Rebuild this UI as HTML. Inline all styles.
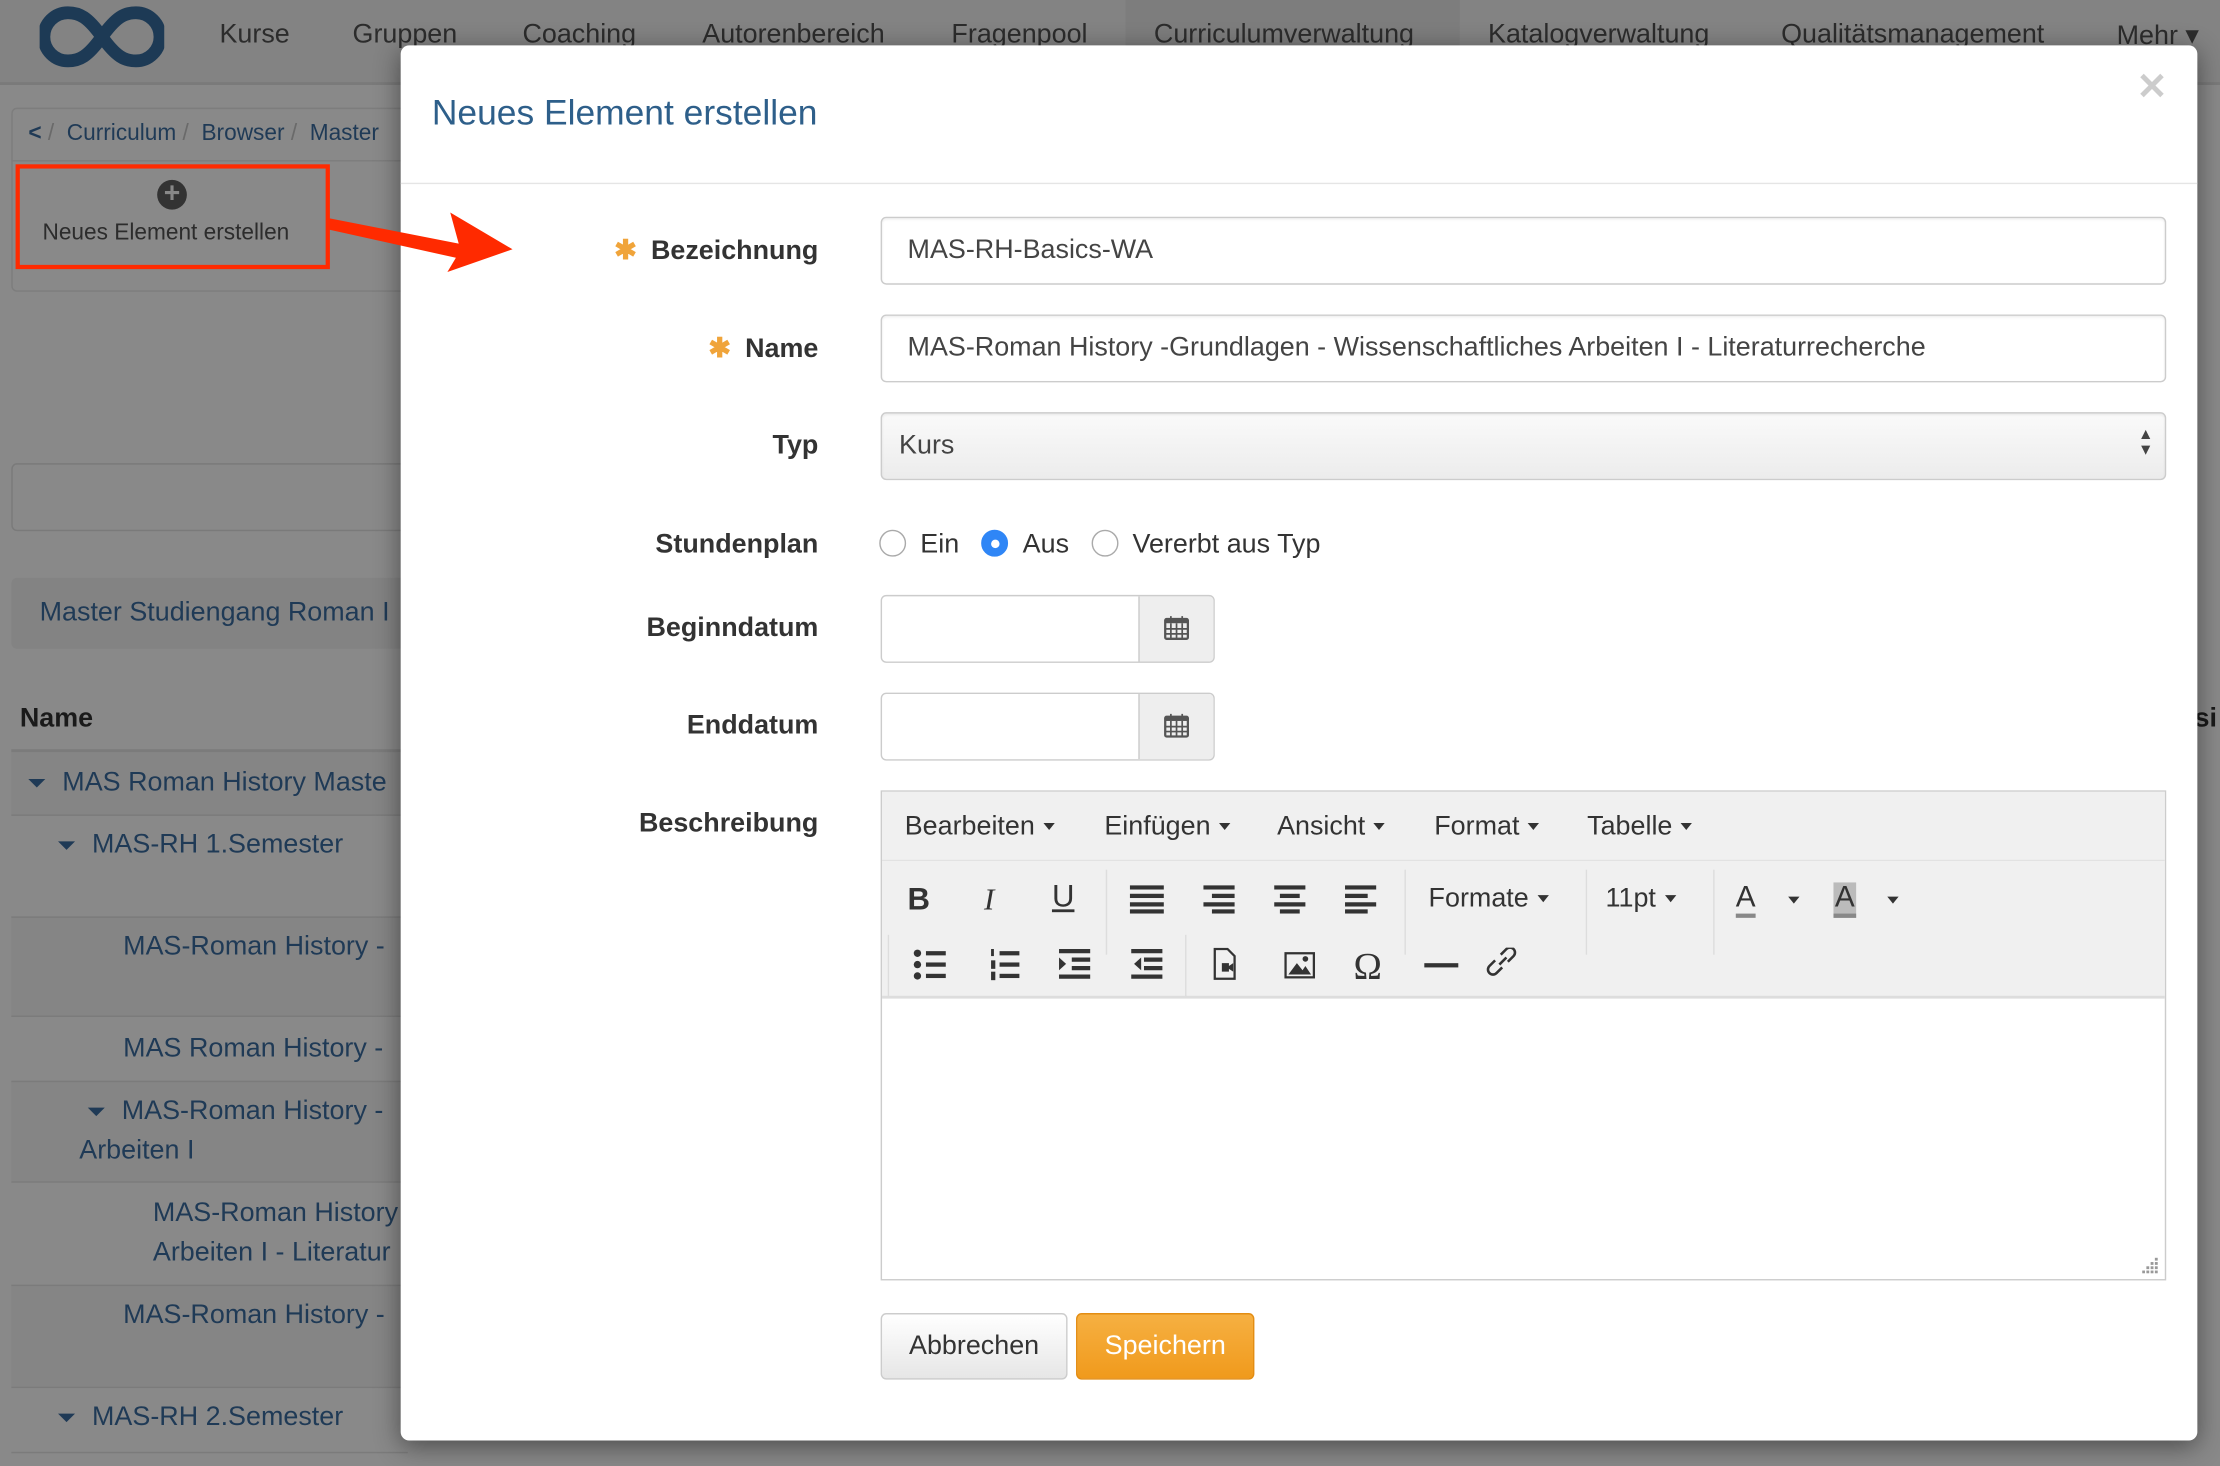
<!DOCTYPE html>
<html><head><meta charset="utf-8"><style>
*{box-sizing:border-box;margin:0;padding:0}
html,body{width:2220px;height:1466px;overflow:hidden;background:#898989}
#s{position:absolute;left:0;top:0;width:1568px;height:1035px;transform:scale(1.41582,1.41643);transform-origin:0 0;font-family:"Liberation Sans",sans-serif;background:#898989}
.a{position:absolute}
.nav{left:0;top:0;width:1568px;height:60px;background:#838383;border-bottom:2px solid #7a7a7a}
.nav span{position:absolute;top:14px;font-size:19px;color:#2c2c2c}
.row{position:absolute;left:8px;width:280px;border-top:1px solid #7b7b7b}
.t{position:absolute;font-size:19px;color:#1f3a56;white-space:nowrap}
.car{display:inline-block;width:0;height:0;border-left:6px solid transparent;border-right:6px solid transparent;border-top:6px solid #1f3a56;vertical-align:middle;margin-right:12px}
.m{left:283px;top:32px;width:1269px;height:985px;background:#fff;border-radius:6px;box-shadow:0 4px 18px rgba(0,0,0,.45)}
.lbl{position:absolute;right:974px;font-size:19px;font-weight:bold;color:#333;white-space:nowrap}
.star{color:#f0a43a;margin-right:10px}
.inp{position:absolute;left:339px;width:908px;height:48px;border:1px solid #ccc;border-radius:4px;font-size:19px;color:#444;padding:12px 18px;box-shadow:inset 0 1px 2px rgba(0,0,0,.07)}
.cal{position:absolute;left:339px;width:236px;height:48px;border:1px solid #ccc;border-radius:4px;overflow:hidden}
.cal div{position:absolute;right:0;top:0;width:53px;height:46px;background:#eee;border-left:1px solid #ccc}
.radio{display:inline-block;width:19px;height:19px;border:1px solid #aaa;border-radius:50%;vertical-align:-3px;margin-right:10px}
.mb span{position:absolute;top:14px;font-size:19px;color:#333}
.dd{display:inline-block;border-left:4px solid transparent;border-right:4px solid transparent;border-top:5px solid #333;vertical-align:middle;margin-left:6px}
.ic{position:absolute;font-size:22px;color:#333}
.sep{position:absolute;width:1px;background:#ddd}
</style></head><body><div id="s">
<div class="a nav">
<svg class="a" style="left:28px;top:4px" width="88" height="44" viewBox="0 0 88 44"><path d="M44 22C34 8 28 5 20 5A17 17 0 0 0 20 39C28 39 34 36 44 22C54 8 60 5 68 5A17 17 0 0 1 68 39C60 39 54 36 44 22Z" fill="none" stroke="#1d3a55" stroke-width="9"/></svg>
<span style="left:155px">Kurse</span><span style="left:249px">Gruppen</span><span style="left:369px">Coaching</span><span style="left:496px">Autorenbereich</span><span style="left:672px">Fragenpool</span>
<div class="a" style="left:795px;top:0;width:236px;height:60px;background:#7d7d7d"></div>
<span style="left:815px">Curriculumverwaltung</span><span style="left:1051px">Katalogverwaltung</span><span style="left:1258px">Qualitätsmanagement</span><span style="left:1495px">Mehr ▾</span>
</div>
<div class="a" style="left:8px;top:76px;width:290px;height:130px;border:1px solid #7d7d7d;border-radius:4px"></div>
<div class="a" style="left:8px;top:76px;width:290px;height:38px;border-bottom:1px solid #7d7d7d"></div>
<div class="t" style="left:20px;top:86px;font-size:16px"><b>&lt;</b> <span style="color:#6a6a6a">/</span>&nbsp; Curriculum <span style="color:#6a6a6a">/</span>&nbsp; Browser <span style="color:#6a6a6a">/</span>&nbsp; Master</div>
<div class="a" style="left:11px;top:116px;width:222px;height:74px;border:3px solid #ff2a00"></div>
<div class="a" style="left:111px;top:127px;width:21px;height:21px;border-radius:50%;background:#333;color:#888;font:bold 20px/21px 'Liberation Sans';text-align:center">+</div>
<div class="t" style="left:30px;top:156px;font-size:16px;color:#2c2c2c">Neues Element erstellen</div>
<div class="a" style="left:8px;top:327px;width:290px;height:48px;border:1px solid #7a7a7a;border-radius:4px"></div>
<div class="a" style="left:8px;top:408px;width:290px;height:50px;background:#838383;border-radius:4px"></div>
<div class="t" style="left:28px;top:422px">Master Studiengang Roman I</div>
<div class="t" style="left:14px;top:497px;font-weight:bold;color:#1a1a1a">Name</div>
<div class="row" style="top:529px;height:46px;background:#858585;border-top:2px solid #7b7b7b"></div>
<div class="t" style="left:20px;top:542px"><span class="car"></span>MAS Roman History Maste</div>
<div class="row" style="top:575px;height:72px"></div>
<div class="t" style="left:41px;top:586px"><span class="car"></span>MAS-RH 1.Semester</div>
<div class="row" style="top:647px;height:70px;background:#858585"></div>
<div class="t" style="left:87px;top:658px">MAS-Roman History -</div>
<div class="row" style="top:717px;height:46px"></div>
<div class="t" style="left:87px;top:730px">MAS Roman History -</div>
<div class="row" style="top:763px;height:71px;background:#858585"></div>
<div class="t" style="left:62px;top:774px"><span class="car"></span>MAS-Roman History -</div>
<div class="t" style="left:56px;top:802px">Arbeiten I</div>
<div class="row" style="top:834px;height:73px"></div>
<div class="t" style="left:108px;top:846px">MAS-Roman History</div>
<div class="t" style="left:108px;top:874px">Arbeiten I - Literatur</div>
<div class="row" style="top:907px;height:72px;background:#858585"></div>
<div class="t" style="left:87px;top:918px">MAS-Roman History -</div>
<div class="row" style="top:979px;height:46px"></div>
<div class="t" style="left:41px;top:990px"><span class="car"></span>MAS-RH 2.Semester</div>
<div class="row" style="top:1025px;height:10px"></div>
<div class="t" style="left:1550px;top:497px;font-weight:bold;color:#1a1a1a">si</div>

<div class="a m">
<div class="a" style="left:22px;top:34px;font-size:25px;color:#2e5f8a">Neues Element erstellen</div>
<div class="a" style="left:1226px;top:14px;font-size:26px;font-weight:bold;color:#ccc">✕</div>
<div class="a" style="left:0;top:97px;width:1269px;height:1px;background:#e5e5e5"></div>
<div class="lbl" style="top:134px"><span class="star">✱</span>Bezeichnung</div>
<div class="inp" style="top:121px">MAS-RH-Basics-WA</div>
<div class="lbl" style="top:203px"><span class="star">✱</span>Name</div>
<div class="inp" style="top:190px">MAS-Roman History -Grundlagen - Wissenschaftliches Arbeiten I - Literaturrecherche</div>
<div class="lbl" style="top:272px">Typ</div>
<div class="inp" style="top:259px;padding-left:12px;background:linear-gradient(#fafafa,#ececec)">Kurs<span style="position:absolute;right:8px;top:10px;font-size:11px;line-height:11px">▲<br>▼</span></div>
<div class="lbl" style="top:342px">Stundenplan</div>
<div class="a" style="left:338px;top:342px;font-size:19px;color:#333;white-space:nowrap"><span class="radio"></span>Ein &nbsp;&nbsp;<span class="radio" style="background:#2f86f6;border-color:#2f86f6;position:relative"><i style="position:absolute;left:6px;top:6px;width:6px;height:6px;border-radius:50%;background:#fff"></i></span>Aus &nbsp;&nbsp;<span class="radio"></span>Vererbt aus Typ</div>
<div class="lbl" style="top:401px">Beginndatum</div>
<div class="cal" style="top:388px"><div><svg style="position:absolute;left:17px;top:13px" width="18" height="18" viewBox="0 0 18 18"><rect x="1" y="3" width="16" height="14" rx="1" fill="none" stroke="#555" stroke-width="1.6"/><rect x="1" y="3" width="16" height="3" fill="#555"/><path d="M5 1v4M13 1v4M1 10h16M1 13.5h16M5 6v11M9 6v11M13 6v11" stroke="#555" stroke-width="1.2"/></svg></div></div>
<div class="lbl" style="top:470px">Enddatum</div>
<div class="cal" style="top:457px"><div><svg style="position:absolute;left:17px;top:13px" width="18" height="18" viewBox="0 0 18 18"><rect x="1" y="3" width="16" height="14" rx="1" fill="none" stroke="#555" stroke-width="1.6"/><rect x="1" y="3" width="16" height="3" fill="#555"/><path d="M5 1v4M13 1v4M1 10h16M1 13.5h16M5 6v11M9 6v11M13 6v11" stroke="#555" stroke-width="1.2"/></svg></div></div>
<div class="lbl" style="top:539px">Beschreibung</div>
<div class="a" style="left:339px;top:526px;width:908px;height:346px;border:1px solid #ccc">
 <div class="a mb" style="left:0;top:0;width:906px;height:49px;background:#f0f0f0;border-bottom:1px solid #e2e2e2">
  <span style="left:16px">Bearbeiten<i class="dd"></i></span><span style="left:157px">Einfügen<i class="dd"></i></span><span style="left:279px">Ansicht<i class="dd"></i></span><span style="left:390px">Format<i class="dd"></i></span><span style="left:498px">Tabelle<i class="dd"></i></span>
 </div>
 <div class="a" style="left:0;top:49px;width:906px;height:97px;background:#f0f0f0;border-bottom:2px solid #ddd">
  <div class="ic" style="left:18px;top:14px;font-weight:bold">B</div>
  <div class="ic" style="left:72px;top:14px;font-family:'Liberation Serif';font-style:italic">I</div>
  <div class="ic" style="left:120px;top:12px;text-decoration:underline">U</div>
  <div class="sep" style="left:158px;top:6px;height:60px"></div>
  <svg class="a" style="left:175px;top:17px" width="180" height="20"><g fill="#333"><rect x="0" y="0" width="24" height="3"/><rect x="0" y="6" width="24" height="3"/><rect x="0" y="12" width="24" height="3"/><rect x="0" y="17" width="24" height="3"/><rect x="52" y="0" width="22" height="3"/><rect x="58" y="6" width="16" height="3"/><rect x="52" y="12" width="22" height="3"/><rect x="58" y="17" width="16" height="3"/><rect x="102" y="0" width="22" height="3"/><rect x="106" y="6" width="14" height="3"/><rect x="102" y="12" width="22" height="3"/><rect x="106" y="17" width="14" height="3"/><rect x="152" y="0" width="22" height="3"/><rect x="152" y="6" width="16" height="3"/><rect x="152" y="12" width="22" height="3"/><rect x="152" y="17" width="16" height="3"/></g></svg>
  <div class="sep" style="left:369px;top:6px;height:60px"></div>
  <div class="ic" style="left:386px;top:16px;font-size:19px">Formate<i class="dd"></i></div>
  <div class="sep" style="left:497px;top:6px;height:60px"></div>
  <div class="ic" style="left:511px;top:16px;font-size:19px">11pt<i class="dd"></i></div>
  <div class="sep" style="left:587px;top:6px;height:60px"></div>
  <div class="ic" style="left:603px;top:15px;font-size:21px;border-bottom:3px solid #888;line-height:22px">A</div><i class="dd" style="position:absolute;left:640px;top:25px;margin:0"></i>
  <div class="ic" style="left:672px;top:15px;font-size:21px;background:#bbb;border-bottom:3px solid #888;line-height:22px;padding:0 1px">A</div><i class="dd" style="position:absolute;left:710px;top:25px;margin:0"></i>
  <div class="sep" style="left:4px;top:52px;height:44px"></div>
  <svg class="a" style="left:22px;top:62px" width="180" height="24"><g fill="#333"><circle cx="3" cy="3" r="2.6"/><circle cx="3" cy="11" r="2.6"/><circle cx="3" cy="19" r="2.6"/><rect x="9" y="1.5" width="14" height="3"/><rect x="9" y="9.5" width="14" height="3"/><rect x="9" y="17.5" width="14" height="3"/><rect x="61" y="1.5" width="14" height="3"/><rect x="61" y="9.5" width="14" height="3"/><rect x="61" y="17.5" width="14" height="3"/><rect x="55" y="0" width="2" height="5"/><rect x="55" y="8" width="3" height="6"/><rect x="55" y="16" width="3" height="6"/><rect x="103" y="0" width="22" height="3"/><rect x="112" y="6" width="13" height="3"/><rect x="112" y="12" width="13" height="3"/><rect x="103" y="18" width="22" height="3"/><path d="M103 6l5 4.5-5 4.5z"/><rect x="154" y="0" width="22" height="3"/><rect x="163" y="6" width="13" height="3"/><rect x="163" y="12" width="13" height="3"/><rect x="154" y="18" width="22" height="3"/><path d="M161 6l-5 4.5 5 4.5z"/></g></svg>
  <div class="sep" style="left:214px;top:52px;height:44px"></div>
  <svg class="a" style="left:233px;top:61px" width="230" height="26"><g fill="none" stroke="#333" stroke-width="1.6"><path d="M2 1h9l5 5v16H2z"/><rect x="52" y="4" width="20" height="17"/></g><path d="M7 11h5v6H7z M12 13l3-2v6l-3-2z" fill="#333"/><path d="M54 19l6-8 4 5 2-3 4 6z" fill="#333"/><circle cx="66" cy="8" r="2" fill="#333"/><text x="100" y="22" font-size="27" font-family="Liberation Serif" fill="#333">Ω</text><rect x="150" y="11" width="24" height="3" fill="#333"/><path d="M205 14l-4 4a3 3 0 0 1-5-5l4-4M209 10l4-4a3 3 0 0 0-5-5l-4 4M203 12l5-5" fill="none" stroke="#333" stroke-width="1.8"/></svg>
 </div>
 <svg class="a" style="right:4px;bottom:4px" width="12" height="12"><g fill="#999"><rect x="9" y="1" width="2" height="2"/><rect x="6" y="4" width="2" height="2"/><rect x="9" y="4" width="2" height="2"/><rect x="3" y="7" width="2" height="2"/><rect x="6" y="7" width="2" height="2"/><rect x="9" y="7" width="2" height="2"/><rect x="0" y="10" width="2" height="2"/><rect x="3" y="10" width="2" height="2"/><rect x="6" y="10" width="2" height="2"/><rect x="9" y="10" width="2" height="2"/></g></svg>
</div>
<div class="a" style="left:339px;top:895px;width:132px;height:47px;border:1px solid #ccc;border-radius:4px;background:linear-gradient(#fff,#e6e6e6);font-size:19px;color:#333;text-align:center;line-height:45px">Abbrechen</div>
<div class="a" style="left:477px;top:895px;width:126px;height:47px;border:1px solid #e38d13;border-radius:4px;background:linear-gradient(#f6b042,#f09a1c);font-size:19px;color:#fff;text-align:center;line-height:45px">Speichern</div>
</div>
<svg class="a" style="left:230px;top:148px" width="135" height="50"><path d="M2 6 L94 24 L88 2 L132 28 L86 44 L92 34 L2 14Z" fill="#ff2a00"/></svg>
</div></body></html>
